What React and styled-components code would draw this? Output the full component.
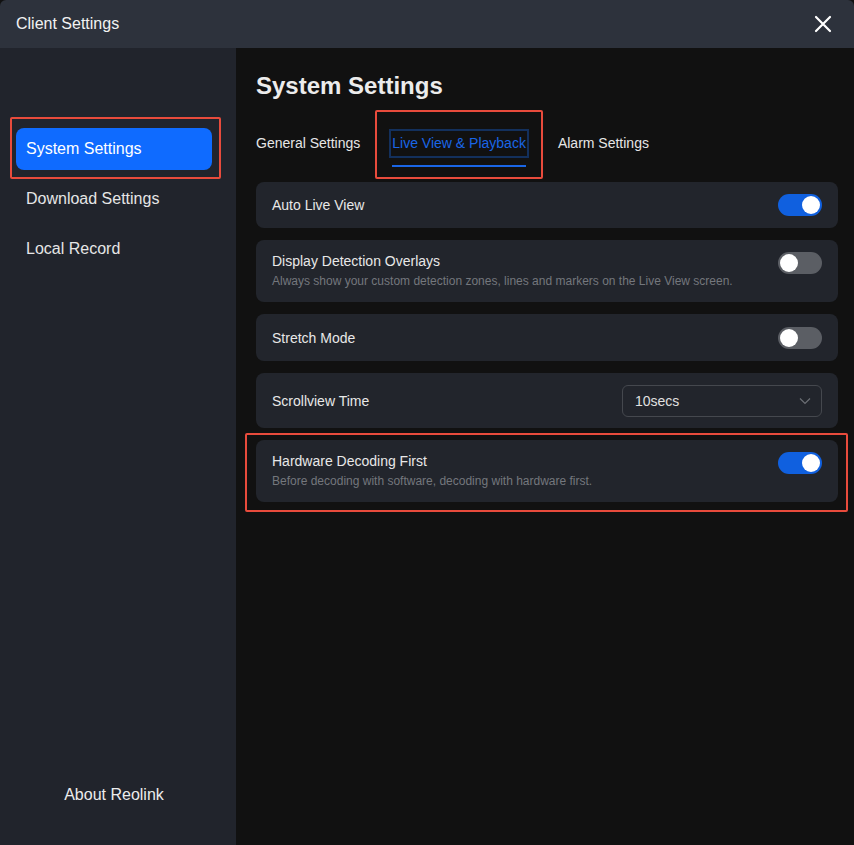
import React from "react";
import styled, { createGlobalStyle } from "styled-components";

const Global = createGlobalStyle`
  html, body { margin: 0; padding: 0; background: #111111; }
  body { font-family: "Liberation Sans", Arial, sans-serif; }
  * { box-sizing: border-box; }
`;

const Window = styled.div`
  width: 854px;
  height: 845px;
  display: flex;
  flex-direction: column;
  background: #111111;
  position: relative;
  overflow: hidden;
`;

const TitleBar = styled.div`
  height: 48px;
  flex: none;
  background: #2d323c;
  display: flex;
  align-items: center;
  justify-content: space-between;
  padding: 0 22px 0 16px;
  border-radius: 6px 6px 0 0;
`;

const Title = styled.div`
  color: #f2f2f2;
  font-size: 16px;
`;

const Close = styled.button`
  width: 18px;
  height: 18px;
  padding: 0;
  border: 0;
  background: none;
  display: flex;
  align-items: center;
  justify-content: center;
`;

const Body = styled.div`
  flex: 1;
  display: flex;
  min-height: 0;
`;

const Sidebar = styled.div`
  width: 236px;
  flex: none;
  background: #21242c;
  display: flex;
  flex-direction: column;
  padding: 80px 24px 41px 16px;
  position: relative;
`;

const NavList = styled.div`
  display: flex;
  flex-direction: column;
  gap: 8px;
  flex: 1;
`;

const NavItem = styled.div`
  height: 42px;
  border-radius: 8px;
  display: flex;
  align-items: center;
  padding-left: 10px;
  font-size: 16px;
  color: ${(p) => (p.$active ? "#ffffff" : "#e6e6e6")};
  background: ${(p) => (p.$active ? "#0f6bff" : "transparent")};
`;

const About = styled.div`
  text-align: center;
  color: #ececec;
  font-size: 16px;
`;

const Main = styled.div`
  flex: 1;
  padding: 22px 16px 0 20px;
  display: flex;
  flex-direction: column;
  position: relative;
`;

const Heading = styled.h1`
  margin: 0;
  font-size: 24px;
  font-weight: bold;
  color: #ececec;
  line-height: 32px;
`;

const Tabs = styled.div`
  display: flex;
  gap: 26px;
  margin: 27px 0 24px -3px;
  height: 29px;
`;

const Tab = styled.div`
  position: relative;
  font-size: 14px;
  color: ${(p) => (p.$active ? "#1a66e6" : "#e6e6e6")};
  line-height: 29px;
  height: 29px;
  padding: 0 3px;
  box-shadow: ${(p) => (p.$active ? "inset 0 0 0 2px #13305c" : "none")};
  &::after {
    content: "";
    display: ${(p) => (p.$active ? "block" : "none")};
    position: absolute;
    left: 3px;
    right: 3px;
    bottom: -9px;
    height: 2px;
    background: #1a66e6;
  }
`;

const Cards = styled.div`
  display: flex;
  flex-direction: column;
  gap: 12px;
`;

const Card = styled.div`
  background: #22252c;
  border-radius: 8px;
  min-height: ${(p) => p.$h}px;
  display: flex;
  align-items: ${(p) => (p.$top ? "flex-start" : "center")};
  justify-content: space-between;
  padding: ${(p) => (p.$top ? "12px 16px 0" : "0 16px")};
`;

const Texts = styled.div`
  display: flex;
  flex-direction: column;
  gap: 4px;
`;

const Label = styled.div`
  font-size: 14px;
  color: #e8e8e8;
  line-height: 18px;
`;

const Desc = styled.div`
  font-size: 12px;
  color: #74777d;
  line-height: 15px;
`;

const Toggle = styled.div`
  width: 44px;
  height: 22px;
  border-radius: 11px;
  flex: none;
  background: ${(p) => (p.$on ? "#1060df" : "#5b5e64")};
  display: flex;
  align-items: center;
  justify-content: ${(p) => (p.$on ? "flex-end" : "flex-start")};
  padding: 2px;
  &::before {
    content: "";
    width: 18px;
    height: 18px;
    border-radius: 50%;
    background: #ffffff;
  }
`;

const Select = styled.div`
  width: 200px;
  height: 32px;
  border: 1px solid #45484e;
  border-radius: 6px;
  display: flex;
  align-items: center;
  justify-content: space-between;
  padding: 0 10px 0 12px;
  color: #e0e0e0;
  font-size: 14px;
`;

const Highlight = styled.div`
  position: absolute;
  border: 2px solid #e84b3c;
  border-radius: 2px;
  pointer-events: none;
`;

function Row({ label, desc, on, h }) {
  return (
    <Card $h={h} $top={!!desc}>
      <Texts>
        <Label>{label}</Label>
        {desc && <Desc>{desc}</Desc>}
      </Texts>
      <Toggle $on={on} />
    </Card>
  );
}

export default function App() {
  return (
    <>
      <Global />
      <Window>
        <TitleBar>
          <Title>Client Settings</Title>
          <Close aria-label="close">
            <svg width="18" height="18" viewBox="0 0 18 18">
              <path d="M2 2L16 16M16 2L2 16" stroke="#ffffff" strokeWidth="2.2" strokeLinecap="round" />
            </svg>
          </Close>
        </TitleBar>
        <Body>
          <Sidebar>
            <NavList>
              <NavItem $active>System Settings</NavItem>
              <NavItem>Download Settings</NavItem>
              <NavItem>Local Record</NavItem>
            </NavList>
            <About>About Reolink</About>
            <Highlight style={{ left: 10, top: 69, width: 211, height: 62 }} />
          </Sidebar>
          <Main>
            <Heading>System Settings</Heading>
            <Tabs>
              <Tab>General Settings</Tab>
              <Tab $active>Live View &amp; Playback</Tab>
              <Tab>Alarm Settings</Tab>
            </Tabs>
            <Cards>
              <Row label="Auto Live View" on h={46} />
              <Row
                label="Display Detection Overlays"
                desc="Always show your custom detection zones, lines and markers on the Live View screen."
                h={62}
              />
              <Row label="Stretch Mode" h={47} />
              <Card $h={55}>
                <Label>Scrollview Time</Label>
                <Select>
                  <span>10secs</span>
                  <svg width="12" height="8" viewBox="0 0 12 8">
                    <path d="M1 1.5L6 6.5L11 1.5" stroke="#6c6f75" strokeWidth="1.2" fill="none" />
                  </svg>
                </Select>
              </Card>
              <Row
                label="Hardware Decoding First"
                desc="Before decoding with software, decoding with hardware first."
                on
                h={62}
              />
            </Cards>
            <Highlight style={{ left: 139, top: 62, width: 168, height: 69 }} />
            <Highlight style={{ left: 9, top: 385, width: 603, height: 79 }} />
          </Main>
        </Body>
      </Window>
    </>
  );
}
